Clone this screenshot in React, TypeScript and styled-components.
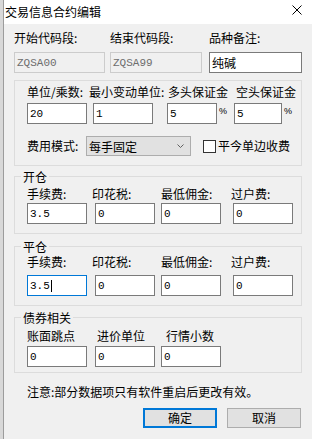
import styled, { createGlobalStyle } from 'styled-components';

const GlobalStyle = createGlobalStyle`
  * {
    box-sizing: border-box;
  }
  html,
  body {
    margin: 0;
    padding: 0;
    background: #f0f0f0;
  }
  body {
    font-family: 'Noto Sans CJK SC', 'Microsoft YaHei', sans-serif;
    font-size: 12px;
    color: #000;
  }
`;

// Window frame

const Window = styled.div`
  display: flex;
  width: 312px;
  height: 439px;
  overflow: hidden;
  background: #f0f0f0;
`;

const LeftEdge = styled.div`
  width: 4px;
  flex-shrink: 0;
  background: #d8d8d8;
  border-right: 1px solid #9c9c9c;
`;

const Dialog = styled.div`
  flex: 1;
  display: flex;
  flex-direction: column;
`;

const TitleBar = styled.div`
  height: 24px;
  display: flex;
  align-items: center;
  justify-content: space-between;
  padding: 0 10px 0 1px;
  background: #fff;
`;

const Title = styled.span`
  line-height: 14px;
`;

const CloseButton = styled.svg`
  align-self: flex-start;
  margin-top: 5px;
`;

const Body = styled.div`
  display: flex;
  flex-direction: column;
  padding: 7px 10px 0 10px;
`;

// Form parts

const Label = styled.span`
  line-height: 14px;
  white-space: nowrap;
`;

const FieldGrid = styled.div<{ $cols: string; $mt?: number }>`
  display: grid;
  grid-template-columns: ${(p) => p.$cols};
  align-items: center;
  margin-top: ${(p) => p.$mt ?? 0}px;
`;

const TextBox = styled.div<{
  $w: number;
  $disabled?: boolean;
  $focused?: boolean;
  $cjk?: boolean;
}>`
  width: ${(p) => p.$w}px;
  height: 21px;
  display: flex;
  align-items: center;
  padding-left: 2px;
  background: ${(p) => (p.$disabled ? '#f0f0f0' : '#fff')};
  border: 1px solid
    ${(p) => (p.$focused ? '#0078d7' : p.$disabled ? '#cccccc' : '#7a7a7a')};
  color: ${(p) => (p.$disabled ? '#6d6d6d' : '#000')};
  font-family: ${(p) =>
    p.$cjk
      ? "'Noto Sans CJK SC', sans-serif"
      : "'Liberation Mono', 'Noto Sans CJK SC', monospace"};
  font-size: ${(p) => (p.$cjk ? 12 : 11)}px;
  white-space: nowrap;
`;

const Caret = styled.span`
  width: 1px;
  height: 12px;
  margin-left: 1px;
  background: #000;
`;

const Cell = styled.div`
  display: flex;
`;

const Percent = styled.span`
  margin: 3px 0 0 2px;
  font-family: 'Liberation Sans', sans-serif;
  font-size: 9px;
  line-height: 10px;
`;

const GroupBox = styled.div<{ $mt: number; $pt?: number; $pb: number }>`
  display: flex;
  flex-direction: column;
  margin-top: ${(p) => p.$mt}px;
  padding: ${(p) => p.$pt ?? 0}px 0 ${(p) => p.$pb}px 12px;
  border: 1px solid #dcdcdc;
`;

const Legend = styled.span`
  align-self: flex-start;
  margin: -7px 0 0 -6px;
  padding: 0 2px;
  line-height: 14px;
  background: #f0f0f0;
`;

const ModeRow = styled.div`
  display: flex;
  align-items: center;
  height: 20px;
  margin-top: 12px;
`;

const Select = styled.div`
  width: 105px;
  height: 20px;
  display: flex;
  align-items: center;
  justify-content: space-between;
  padding: 0 6px 0 2px;
  background: #e1e1e1;
  border: 1px solid #adadad;
  margin-left: 1px;
`;

const CheckLabel = styled.label`
  display: flex;
  align-items: center;
  gap: 2px;
  margin-left: 12px;
  line-height: 14px;
`;

const CheckBox = styled.span`
  width: 13px;
  height: 13px;
  background: #fff;
  border: 1px solid #333;
`;

const Note = styled.div`
  margin-top: 12px;
  padding-left: 13px;
  line-height: 14px;
`;

const ButtonRow = styled.div`
  display: flex;
  justify-content: flex-end;
  gap: 10px;
  margin-top: 9px;
  padding-right: 1px;
`;

const Button = styled.div<{ $primary?: boolean }>`
  width: 74px;
  height: 20px;
  display: flex;
  align-items: center;
  justify-content: center;
  background: #e1e1e1;
  border: ${(p) => (p.$primary ? '2px solid #0078d7' : '1px solid #adadad')};
  line-height: 14px;
`;

// Data

const feeLabels = ['手续费:', '印花税:', '最低佣金:', '过户费:'];
const feeLabelCols = '65px 69px 70px auto';
const feeInputCols = '68px 66px 72px auto';

export default function App() {
  return (
    <>
      <GlobalStyle />
      <Window>
        <LeftEdge />
        <Dialog>
          <TitleBar>
            <Title>交易信息合约编辑</Title>
            <CloseButton width="10" height="10" viewBox="0 0 10 10">
              <path d="M0.5 0.5 L9.5 9.5 M9.5 0.5 L0.5 9.5" stroke="#000" strokeWidth="1" />
            </CloseButton>
          </TitleBar>
          <Body>
            <FieldGrid $cols="96px 99px 93px">
              <Label>开始代码段:</Label>
              <Label>结束代码段:</Label>
              <Label>品种备注:</Label>
            </FieldGrid>
            <FieldGrid $cols="96px 99px 93px" $mt={7}>
              <TextBox $w={91} $disabled>ZQSA00</TextBox>
              <TextBox $w={92} $disabled>ZQSA99</TextBox>
              <TextBox $w={93} $cjk>纯碱</TextBox>
            </FieldGrid>

            <GroupBox $mt={7} $pt={4} $pb={9}>
              <FieldGrid $cols="62px 79px 68px auto">
                <Label>单位/乘数:</Label>
                <Label>最小变动单位:</Label>
                <Label>多头保证金</Label>
                <Label>空头保证金</Label>
              </FieldGrid>
              <FieldGrid $cols="66px 74px 67px auto" $mt={4}>
                <TextBox $w={60}>20</TextBox>
                <TextBox $w={60}>1</TextBox>
                <Cell>
                  <TextBox $w={50}>5</TextBox>
                  <Percent>%</Percent>
                </Cell>
                <Cell>
                  <TextBox $w={48}>5</TextBox>
                  <Percent>%</Percent>
                </Cell>
              </FieldGrid>
              <ModeRow>
                <Label style={{ width: 58 }}>费用模式:</Label>
                <Select>
                  <span>每手固定</span>
                  <svg width="7" height="4" viewBox="0 0 7 4">
                    <path d="M0.5 0.5 L3.5 3.5 L6.5 0.5" fill="none" stroke="#606060" strokeWidth="1" />
                  </svg>
                </Select>
                <CheckLabel>
                  <CheckBox />
                  平今单边收费
                </CheckLabel>
              </ModeRow>
            </GroupBox>

            <GroupBox $mt={10} $pb={9}>
              <Legend>开仓</Legend>
              <FieldGrid $cols={feeLabelCols} $mt={3}>
                {feeLabels.map((l) => (
                  <Label key={l}>{l}</Label>
                ))}
              </FieldGrid>
              <FieldGrid $cols={feeInputCols} $mt={2}>
                <TextBox $w={60}>3.5</TextBox>
                <TextBox $w={60}>0</TextBox>
                <TextBox $w={60}>0</TextBox>
                <TextBox $w={60}>0</TextBox>
              </FieldGrid>
            </GroupBox>

            <GroupBox $mt={12} $pb={9}>
              <Legend>平仓</Legend>
              <FieldGrid $cols={feeLabelCols} $mt={1}>
                {feeLabels.map((l) => (
                  <Label key={l}>{l}</Label>
                ))}
              </FieldGrid>
              <FieldGrid $cols={feeInputCols} $mt={6}>
                <TextBox $w={60} $focused>
                  3.5
                  <Caret />
                </TextBox>
                <TextBox $w={60}>0</TextBox>
                <TextBox $w={60}>0</TextBox>
                <TextBox $w={60}>0</TextBox>
              </FieldGrid>
            </GroupBox>

            <GroupBox $mt={11} $pb={5}>
              <Legend>债券相关</Legend>
              <FieldGrid $cols="70px 69px auto" $mt={4}>
                <Label>账面跳点</Label>
                <Label>进价单位</Label>
                <Label>行情小数</Label>
              </FieldGrid>
              <FieldGrid $cols="68px 66px auto" $mt={3}>
                <TextBox $w={60}>0</TextBox>
                <TextBox $w={60}>0</TextBox>
                <TextBox $w={60}>0</TextBox>
              </FieldGrid>
            </GroupBox>

            <Note>注意:部分数据项只有软件重启后更改有效。</Note>

            <ButtonRow>
              <Button $primary>确定</Button>
              <Button>取消</Button>
            </ButtonRow>
          </Body>
        </Dialog>
      </Window>
    </>
  );
}
